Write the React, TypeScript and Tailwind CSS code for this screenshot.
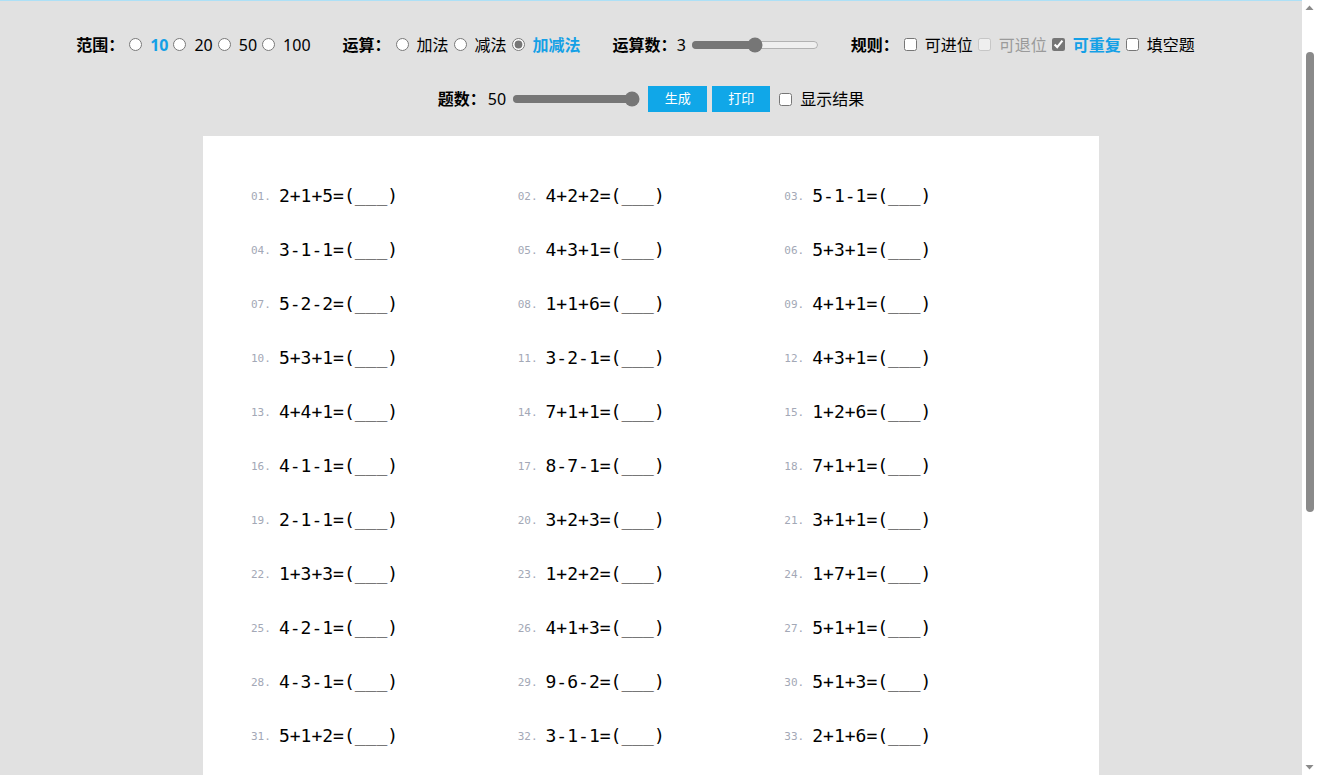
import { useState } from 'react'

const UI_FONT = { fontFamily: '"Noto Sans", "Noto Sans CJK SC", sans-serif' }
const MONO_FONT = { fontFamily: '"DejaVu Sans Mono", "Liberation Mono", monospace' }

const PROBLEMS = [
  '2+1+5', '4+2+2', '5-1-1', '3-1-1', '4+3+1', '5+3+1', '5-2-2', '1+1+6', '4+1+1',
  '5+3+1', '3-2-1', '4+3+1', '4+4+1', '7+1+1', '1+2+6', '4-1-1', '8-7-1', '7+1+1',
  '2-1-1', '3+2+3', '3+1+1', '1+3+3', '1+2+2', '1+7+1', '4-2-1', '4+1+3', '5+1+1',
  '4-3-1', '9-6-2', '5+1+3', '5+1+2', '3-1-1', '2+1+6', '6-2-1', '2+2+4', '9-5-3',
  '1+4+2', '7-3-2', '3+3+2', '6+1+1', '8-4-2', '2+5+1', '5-3-1', '1+1+1', '7-2-4',
  '3+4+1', '6-3-2', '2+3+2', '9-4-4', '1+6+2',
]

function Radio({ label, checked, highlight }: { label: string; checked?: boolean; highlight?: boolean }) {
  return (
    <label className="flex items-center">
      <input type="radio" name="g" defaultChecked={checked} className="ml-[5px] w-[13px] h-[13px] accent-[#767676]" />
      <span className={highlight ? 'ml-[8px] font-bold text-[#14a0e6]' : 'ml-[8px]'}>{label}</span>
    </label>
  )
}

function Check({ label, checked, disabled, highlight }: { label: string; checked?: boolean; disabled?: boolean; highlight?: boolean }) {
  let cls = 'ml-[8px]'
  if (highlight) cls += ' font-bold text-[#14a0e6]'
  if (disabled) cls += ' text-[#9a9a9a]'
  return (
    <label className="flex items-center">
      <input type="checkbox" defaultChecked={checked} disabled={disabled} className="ml-[5px] w-[13px] h-[13px] accent-[#767676]" />
      <span className={cls}>{label}</span>
    </label>
  )
}

// the page's own scroll bar, drawn so it shows in the screenshot
function ScrollBar() {
  return (
    <div className="w-[15px] shrink-0 bg-white flex flex-col items-center">
      <svg width="15" height="17" viewBox="0 0 15 17" className="shrink-0">
        <path d="M3.5 10 L7.5 5.5 L11.5 10 Z" fill="#8a8a8a" />
      </svg>
      <div className="mt-[35px] w-[8px] h-[460px] rounded-full bg-[#8a8a8a]" />
      <div className="flex-1" />
      <svg width="15" height="17" viewBox="0 0 15 17" className="shrink-0">
        <path d="M3.5 7 L7.5 11.5 L11.5 7 Z" fill="#8a8a8a" />
      </svg>
    </div>
  )
}

export default function App() {
  const [ops, setOps] = useState(3)
  const [count, setCount] = useState(50)

  return (
    <div className="flex h-screen bg-[#e1e1e1] text-black" style={UI_FONT}>
      <div className="flex-1 overflow-y-auto [scrollbar-width:none] border-t border-[#ade0f6]">
        <div className="pb-10">
          {/* settings row */}
          <div className="flex items-center justify-center gap-[32px] pr-[31px] pt-[31px] h-[56px] text-[16px]">
            <div className="flex items-center">
              <span className="font-bold">范围：</span>
              <Radio label="10" checked highlight />
              <Radio label="20" />
              <Radio label="50" />
              <Radio label="100" />
            </div>
            <div className="flex items-center">
              <span className="font-bold">运算：</span>
              <Radio label="加法" />
              <Radio label="减法" />
              <Radio label="加减法" checked highlight />
            </div>
            <div className="flex items-center">
              <span className="font-bold">运算数：</span>
              <span>{ops}</span>
              <input type="range" min={2} max={4} value={ops} onChange={e => setOps(+e.target.value)}
                className="ml-[5px] w-[128px] accent-[#767676]" />
            </div>
            <div className="flex items-center">
              <span className="font-bold">规则：</span>
              <Check label="可进位" />
              <Check label="可退位" disabled />
              <Check label="可重复" checked highlight />
              <Check label="填空题" />
            </div>
          </div>

          <div className="flex items-center justify-center mt-[29px] h-[26px] text-[16px]">
            <span className="font-bold">题数：</span>
            <span className="ml-[2px]">{count}</span>
            <input type="range" min={10} max={50} value={count} onChange={e => setCount(+e.target.value)}
              className="ml-[6px] w-[128px] accent-[#767676]" />
            <button className="ml-[8px] w-[59px] h-[26px] bg-[#10a7e8] text-white text-[13px]">生成</button>
            <button className="ml-[5px] w-[58px] h-[26px] bg-[#10a7e8] text-white text-[13px]">打印</button>
            <label className="flex items-center ml-[4px]">
              <input type="checkbox" className="ml-[5px] w-[13px] h-[13px] accent-[#767676]" />
              <span className="ml-[8px]">显示结果</span>
            </label>
          </div>

          {/* worksheet */}
          <div className="mx-auto mt-[24px] w-[896px] bg-white px-[48px] pt-[32px] pb-[40px]">
            <div className="grid grid-cols-3">
              {PROBLEMS.slice(0, count).map((p, i) => (
                <div key={i} className="flex items-center h-[54px]">
                  <span className="text-[11px] text-[#a3a8b6] mr-[8px] pt-[5px]" style={MONO_FONT}>
                    {String(i + 1).padStart(2, '0')}.
                  </span>
                  <span className="text-[18px] text-black" style={MONO_FONT}>{p}=(___)</span>
                </div>
              ))}
            </div>
          </div>
        </div>
      </div>
      <ScrollBar />
    </div>
  )
}
